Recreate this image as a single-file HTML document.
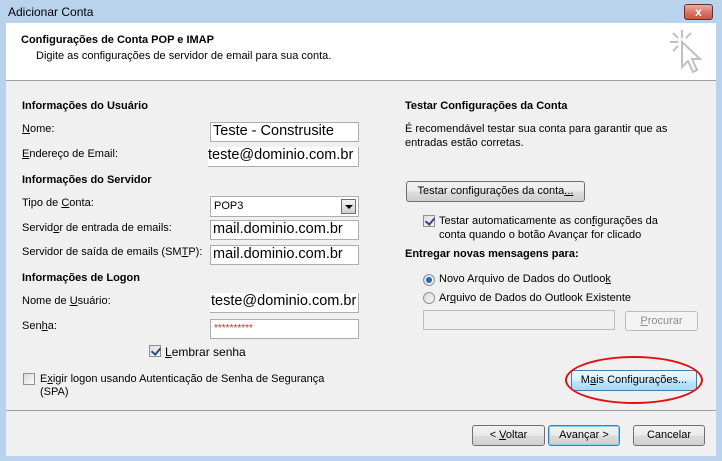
<!DOCTYPE html>
<html><head><meta charset="utf-8"><style>
*{margin:0;padding:0;box-sizing:border-box}
body{width:722px;height:461px;background:#bad3ec;font-family:"Liberation Sans","DejaVu Sans",sans-serif;font-size:11px;color:#000;position:relative;overflow:hidden}
.a{position:absolute;white-space:nowrap;line-height:13px}
.b{font-weight:bold}
.in{position:absolute;background:#fff;border:1px solid #abadb3;font-size:14.5px;line-height:17px;padding-left:2px;overflow:hidden;white-space:nowrap}
.btn{position:absolute;border:1px solid #707070;border-radius:3px;background:linear-gradient(#f2f2f2 0%,#ebebeb 50%,#dddddd 51%,#cfcfcf 100%);text-align:center;line-height:19px;font-size:11px}
.cb{position:absolute;width:12px;height:12px;border:1px solid #8f8f8f;background:linear-gradient(135deg,#dcdcdc,#fafafa)}
.cb.k::after{content:"";position:absolute;left:3px;top:0px;width:4px;height:7px;border:solid #2a4a8a;border-width:0 2px 2px 0;transform:rotate(40deg)}
.rd{position:absolute;width:12px;height:12px;border-radius:50%;border:1px solid #8f8f8f;background:linear-gradient(135deg,#d8d8d8,#fafafa)}
u{text-decoration:underline}
</style></head><body>
<div class="a" style="left:8px;top:6px;font-size:12px">Adicionar Conta</div>
<div style="position:absolute;left:684px;top:4px;width:29px;height:16px;border:1px solid #6d2a2a;border-radius:3px;background:linear-gradient(#e9b0a6,#d8776a 50%,#c75545);color:#fff;font-weight:bold;font-size:12px;text-align:center;line-height:14px">x</div>
<div style="position:absolute;left:6px;top:23px;width:710px;height:433px;background:#f0f0f0"></div>
<div style="position:absolute;left:6px;top:23px;width:710px;height:58px;background:#fff;border-bottom:1px solid #a0a0a0"></div>
<div class="a b" style="left:21px;top:34px">Configurações de Conta POP e IMAP</div>
<div class="a" style="left:36px;top:50px">Digite as configurações de servidor de email para sua conta.</div>
<svg style="position:absolute;left:668px;top:28px" width="36" height="50" viewBox="0 0 36 50" fill="none" stroke="#c0c0c0" stroke-width="2"><path d="M14 2v8M2 14h8M5 5l5 5M23 5l-5 5M5 23l5-5"/><path d="M14 14l0 25 6-6 5 11 4-2-5-11 8 0z" fill="#fff"/></svg>

<div class="a b" style="left:22px;top:100px">Informações do Usuário</div>
<div class="a" style="left:22px;top:123px"><u>N</u>ome:</div>
<div class="in" style="left:210px;top:122px;width:149px;height:20px">Teste - Construsite</div>
<div class="a" style="left:22px;top:148px"><u>E</u>ndereço de Email:</div>
<div class="in" style="left:208px;top:147px;width:151px;height:20px;border-left:none;border-top:none;padding-left:0">teste@dominio.com.br</div>
<div class="a b" style="left:22px;top:174px">Informações do Servidor</div>
<div class="a" style="left:22px;top:197px">Tipo de <u>C</u>onta:</div>
<div class="in" style="left:210px;top:196px;width:149px;height:21px;font-size:11px;line-height:19px;padding-left:3px">POP3<div style="position:absolute;right:2px;top:2px;width:15px;height:15px;border:1px solid #707070;background:linear-gradient(#f2f2f2,#d0d0d0)"><div style="position:absolute;left:3px;top:5px;border:4px solid transparent;border-top:4px solid #000;border-bottom:none"></div></div></div>
<div class="a" style="left:22px;top:222px">Servid<u>o</u>r de entrada de emails:</div>
<div class="in" style="left:210px;top:220px;width:149px;height:20px">mail.dominio.com.br</div>
<div class="a" style="left:22px;top:246px">Servidor de saída de emails (SM<u>T</u>P):</div>
<div class="in" style="left:210px;top:245px;width:149px;height:20px">mail.dominio.com.br</div>
<div class="a b" style="left:22px;top:272px">Informações de Logon</div>
<div class="a" style="left:22px;top:295px">Nome de <u>U</u>suário:</div>
<div class="in" style="left:210px;top:293px;width:149px;height:20px;border-top:none;border-left:none;padding-left:1px">teste@dominio.com.br</div>
<div class="a" style="left:22px;top:320px">Sen<u>h</u>a:</div>
<div class="in" style="left:210px;top:319px;width:149px;height:20px;color:#e02020;font-size:10px;line-height:18px;padding-left:3px">**********</div>
<div class="cb k" style="left:149px;top:345px"></div>
<div class="a" style="left:165px;top:346px;font-size:12px"><u>L</u>embrar senha</div>
<div class="cb" style="left:23px;top:373px"></div>
<div class="a" style="left:40px;top:373px">E<u>x</u>igir logon usando Autenticação de Senha de Segurança</div>
<div class="a" style="left:40px;top:386px">(SPA)</div>

<div class="a b" style="left:405px;top:100px">Testar Configurações da Conta</div>
<div class="a" style="left:405px;top:123px">É recomendável testar sua conta para garantir que as</div>
<div class="a" style="left:405px;top:137px">entradas estão corretas.</div>
<div class="btn" style="left:406px;top:181px;width:179px;height:21px">Testar configurações da conta<u>...</u></div>
<div class="cb k" style="left:423px;top:215px"></div>
<div class="a" style="left:439px;top:215px">Testar automaticamente as con<u>f</u>igurações da</div>
<div class="a" style="left:439px;top:229px">conta quando o botão Avançar for clicado</div>
<div class="a b" style="left:405px;top:248px">Entregar novas mensagens para:</div>
<div class="rd" style="left:423px;top:274px"><div style="position:absolute;left:2px;top:2px;width:6px;height:6px;border-radius:50%;background:#1e6eb0"></div></div>
<div class="a" style="left:439px;top:273px">Novo Arquivo de Dados do Outloo<u>k</u></div>
<div class="rd" style="left:423px;top:292px"></div>
<div class="a" style="left:439px;top:292px">Ar<u>q</u>uivo de Dados do Outlook Existente</div>
<div style="position:absolute;left:423px;top:310px;width:192px;height:20px;border:1px solid #bcbcbc;background:#f0f0f0"></div>
<div style="position:absolute;left:625px;top:311px;width:73px;height:20px;border:1px solid #bcbcbc;border-radius:3px;background:#f4f4f4;color:#8d8d8d;text-align:center;line-height:18px"><u>P</u>rocurar</div>
<div class="btn" style="left:571px;top:370px;width:126px;height:21px;border-color:#3c7fb1;background:linear-gradient(#eaf6fd,#d9f0fc 50%,#bee6fd 51%,#a7d9f5)">M<u>a</u>is Configurações...</div>
<div style="position:absolute;left:565px;top:356px;width:138px;height:48px;border:2px solid #e01010;border-radius:50%"></div>
<div style="position:absolute;left:6px;top:410px;width:710px;height:1px;background:#a0a0a0"></div>
<div class="btn" style="left:472px;top:425px;width:73px;height:21px">&lt; <u>V</u>oltar</div>
<div class="btn" style="left:548px;top:425px;width:72px;height:21px;border-color:#3c7fb1;box-shadow:inset 0 0 0 1px #7fd0f7">Avançar &gt;</div>
<div class="btn" style="left:633px;top:425px;width:72px;height:21px">Cancelar</div>
</body></html>
